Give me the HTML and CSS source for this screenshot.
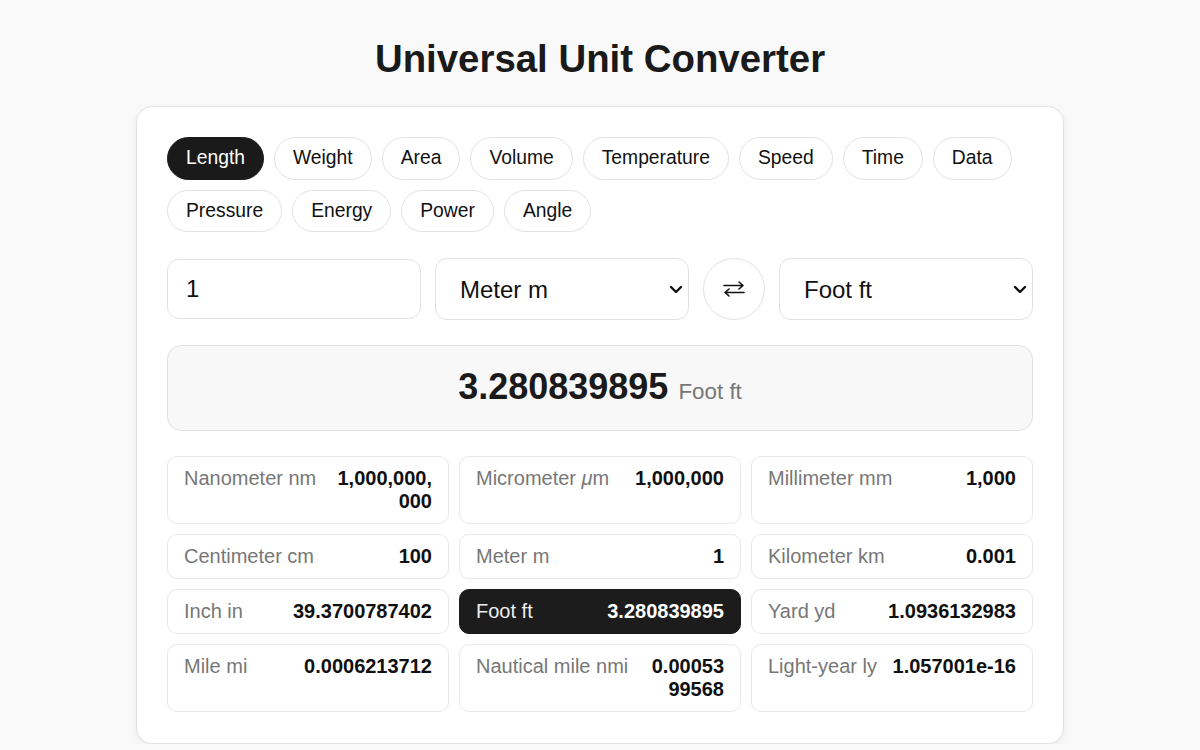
FILE: index.html
```html
<!DOCTYPE html>
<html lang="en">
<head>
<meta charset="utf-8">
<title>Universal Unit Converter</title>
<link rel="stylesheet" href="styles.css">
</head>
<body>
	<h1 class="title">Universal Unit Converter</h1>
	<div class="card">
		<ul class="tabs">
			<li class="tab ac">Length</li>
			<li class="tab">Weight</li>
			<li class="tab">Area</li>
			<li class="tab">Volume</li>
			<li class="tab">Temperature</li>
			<li class="tab">Speed</li>
			<li class="tab">Time</li>
			<li class="tab">Data</li>
			<li class="tab">Pressure</li>
			<li class="tab">Energy</li>
			<li class="tab">Power</li>
			<li class="tab">Angle</li>
		</ul>

		<div class="controls">
			<input class="amount" type="text" value="1">
			<div class="pick">
				<select>
					<option>Nanometer nm</option>
					<option>Micrometer μm</option>
					<option>Millimeter mm</option>
					<option>Centimeter cm</option>
					<option selected>Meter m</option>
					<option>Kilometer km</option>
					<option>Inch in</option>
					<option>Foot ft</option>
					<option>Yard yd</option>
					<option>Mile mi</option>
				</select>
				<svg class="chev" width="14" height="9" viewBox="0 0 14 9"><path d="M2 2l5 5 5-5" fill="none" stroke="#111" stroke-width="2.4" stroke-linecap="round" stroke-linejoin="round"/></svg>
			</div>
			<button class="swap" type="button">
				<svg width="22" height="16" viewBox="0 0 22 16"><path d="M1 4.5h19M16 1l4 3.5-4 3.5M21 11.5H2M6 8l-4 3.5 4 3.5" fill="none" stroke="#111" stroke-width="1.6" stroke-linecap="round" stroke-linejoin="round"/></svg>
			</button>
			<div class="pick">
				<select>
					<option>Meter m</option>
					<option>Inch in</option>
					<option selected>Foot ft</option>
					<option>Yard yd</option>
					<option>Mile mi</option>
				</select>
				<svg class="chev" width="14" height="9" viewBox="0 0 14 9"><path d="M2 2l5 5 5-5" fill="none" stroke="#111" stroke-width="2.4" stroke-linecap="round" stroke-linejoin="round"/></svg>
			</div>
		</div>

		<div class="result"><b>3.280839895</b><span class="unit">Foot ft</span></div>

		<div class="grid">
			<div class="cell"><span class="lbl">Nanometer nm</span><span class="val">1,000,000,000</span></div>
			<div class="cell"><span class="lbl">Micrometer <i>μ</i>m</span><span class="val">1,000,000</span></div>
			<div class="cell"><span class="lbl">Millimeter mm</span><span class="val">1,000</span></div>
			<div class="cell"><span class="lbl">Centimeter cm</span><span class="val">100</span></div>
			<div class="cell"><span class="lbl">Meter m</span><span class="val">1</span></div>
			<div class="cell"><span class="lbl">Kilometer km</span><span class="val">0.001</span></div>
			<div class="cell"><span class="lbl">Inch in</span><span class="val">39.3700787402</span></div>
			<div class="cell ac"><span class="lbl">Foot ft</span><span class="val">3.280839895</span></div>
			<div class="cell"><span class="lbl">Yard yd</span><span class="val">1.0936132983</span></div>
			<div class="cell"><span class="lbl">Mile mi</span><span class="val">0.0006213712</span></div>
			<div class="cell"><span class="lbl">Nautical mile nmi</span><span class="val">0.0005399568</span></div>
			<div class="cell"><span class="lbl">Light-year ly</span><span class="val">1.057001e-16</span></div>
		</div>
	</div>
</body>
</html>
```

FILE: styles.css
```css
* {margin:0; padding:0; box-sizing:border-box;}
li {list-style:none;}
body {background:#f9f9f9; color:#111; font-family:"Liberation Sans", Arial, Helvetica, sans-serif; padding-top:36px;}

.title {font-size:38.4px; line-height:46px; font-weight:700; text-align:center; color:#1a1a1a; margin-bottom:24px;}

.card {width:928px; margin:0 auto; background:#fff; border:1px solid #e2e2e2; border-radius:16px; padding:30px 30px 31px; box-shadow:0 2px 6px rgba(0,0,0,0.06);}

/* category pills */
.tabs {display:flex; flex-wrap:wrap; gap:10px; margin-bottom:26px;}
.tab {font-size:19.3px; line-height:22.6px; padding:9px 18px; border:1px solid #e2e2e2; border-radius:999px; background:#fff; color:#111; cursor:pointer;}
.tab.ac {background:#1a1a1a; border-color:#1a1a1a; color:#fff;}

/* from / to row */
.controls {display:grid; grid-template-columns:1fr 1fr 62px 1fr; gap:14px; align-items:center; margin-bottom:25px;}
.amount {height:60px; width:100%; font:24px "Liberation Sans", Arial, sans-serif; color:#111; padding:0 18px; border:1px solid #e2e2e2; border-radius:12px; background:#fff; outline:none;}
.pick {position:relative;}
.pick select {appearance:none; -webkit-appearance:none; width:100%; height:62px; font:24px "Liberation Sans", Arial, sans-serif; color:#111; padding:0 30px 0 24px; border:1px solid #e2e2e2; border-radius:12px; background:#fff; outline:none;}
.chev {position:absolute; right:6px; top:27px; pointer-events:none;}
.swap {width:62px; height:62px; border-radius:50%; border:1px solid #e2e2e2; background:#fff; display:flex; align-items:center; justify-content:center; cursor:pointer;}

/* main result */
.result {height:86px; display:flex; justify-content:center; align-items:baseline; gap:10px; padding:19px 20px 0; background:#f8f8f8; border:1px solid #e2e2e2; border-radius:14px; margin-bottom:25px;}
.result b {font-size:36px; line-height:44px; color:#1a1a1a;}
.result .unit {font-size:22.4px; line-height:normal; color:#777;}

/* all units */
.grid {display:grid; grid-template-columns:repeat(3, 1fr); gap:10px;}
.cell {display:flex; gap:14px; align-items:flex-start; padding:10px 16px; border:1px solid #e8e8e8; border-radius:10px; font-size:20px; line-height:23px;}
.cell .lbl {flex:none; white-space:nowrap; color:#777;}
.cell .val {flex:1 1 auto; min-width:0; text-align:right; font-weight:700; color:#111; overflow-wrap:anywhere;}
.cell.ac {background:#1c1c1c; border-color:#1c1c1c;}
.cell.ac .lbl {color:#eee;}
.cell.ac .val {color:#fff;}
```
